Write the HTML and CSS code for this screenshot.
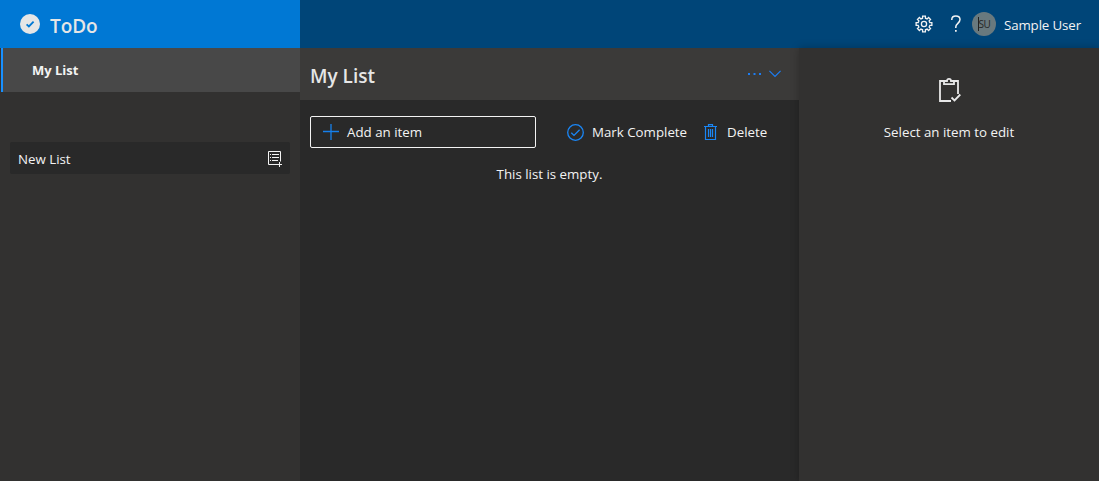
FILE: index.html
```html
<!DOCTYPE html>
<html lang="en">
<head>
    <meta charset="UTF-8">
    <meta name="viewport" content="width=device-width, initial-scale=1.0">
    <title>ToDo</title>
    <link rel="stylesheet" href="styles.css">
</head>
<body>
    <header class="header">
        <div class="brand">
            <svg class="brand-icon" width="20" height="20" viewBox="0 0 20 20">
                <circle cx="10" cy="10" r="10" fill="#e6e6e6"/>
                <path d="M6.6 10.3l2.3 2.2 4.7-4.8" fill="none" stroke="#0078d4" stroke-width="1.8"/>
            </svg>
            <span class="brand-name">ToDo</span>
        </div>
        <div class="account">
            <svg class="gear" width="18" height="18" viewBox="0 0 18 18" fill="none" stroke="#f3f3f3" stroke-width="1.3">
                <path d="M7.56 3.19L7.61 1.12L10.39 1.12L10.44 3.19L12.09 3.87L13.59 2.45L15.55 4.41L14.13 5.91L14.81 7.56L16.88 7.61L16.88 10.39L14.81 10.44L14.13 12.09L15.55 13.59L13.59 15.55L12.09 14.13L10.44 14.81L10.39 16.88L7.61 16.88L7.56 14.81L5.91 14.13L4.41 15.55L2.45 13.59L3.87 12.09L3.19 10.44L1.12 10.39L1.12 7.61L3.19 7.56L3.87 5.91L2.45 4.41L4.41 2.45L5.91 3.87Z"/>
                <circle cx="9" cy="9" r="2.6"/>
            </svg>
            <svg class="help" width="10" height="18" viewBox="0 0 10 18">
                <path d="M.8 5V4.4C.8 2.1 2.500.9 4.800.9s4.200 1.300 4.200 3.600c0 3.700-4.200 4-4.200 7.500v1" fill="none" stroke="#f3f3f3" stroke-width="1.500"/>
                <path d="M4 15h1.700v1.700H4z" fill="#f3f3f3"/>
            </svg>
            <div class="avatar"><span>SU</span></div>
            <span class="user-name">Sample User</span>
        </div>
    </header>

    <div class="layout">
        <nav class="sidebar">
            <a class="list-link">My List</a>
            <div class="new-list">
                <span>New List</span>
                <svg width="16" height="16" viewBox="0 0 16 16" fill="none" stroke="#f3f3f3">
                    <path d="M10 13.500H1.500V.5h12v10"/>
                    <path d="M3 3.500h1M5 3.500h7M3 6.500h1M5 6.500h7M3 9.500h1M5 9.500h6"/>
                    <path d="M10 13.500h5M12.500 11v5"/>
                </svg>
            </div>
        </nav>

        <main class="content">
            <div class="title-bar">
                <h1>My List</h1>
                <svg class="more" width="14" height="4" viewBox="0 0 14 4" fill="#1d7df2">
                    <path d="M0 1h2v2H0zM5.500 1h2v2h-2zM11 1h2v2h-2z"/>
                </svg>
                <svg class="chevron" width="12" height="8" viewBox="0 0 12 8">
                    <path d="M.4.9L6 6.500 11.600.9" fill="none" stroke="#1d7df2" stroke-width="1.200"/>
                </svg>
            </div>
            <div class="toolbar">
                <div class="add-item">
                    <svg width="16" height="16" viewBox="0 0 16 16">
                        <path d="M0 7.500h16M8 0v16" fill="none" stroke="#1680ec" stroke-width="1.300"/>
                    </svg>
                    <span>Add an item</span>
                </div>
                <button class="command complete">
                    <svg width="17" height="17" viewBox="0 0 17 17" fill="none" stroke="#1a86f5" stroke-width="1.300">
                        <circle cx="8.500" cy="8.500" r="7.800"/>
                        <path d="M4.300 8.700l2.700 2.700 5.600-5.700"/>
                    </svg>
                    <span>Mark Complete</span>
                </button>
                <button class="command delete">
                    <svg width="13" height="17" viewBox="0 0 13 17" fill="none" stroke="#1a86f5" stroke-width="1.200">
                        <path d="M0 2.500h13M4.500 2.500V.6h4v1.900M1.500 2.500v13h10v-13"/>
                        <path d="M4.500 5v8M6.500 5v8M8.500 5v8"/>
                    </svg>
                    <span>Delete</span>
                </button>
            </div>
            <p class="empty">This list is empty.</p>
        </main>

        <aside class="details">
            <svg class="clipboard" width="22" height="26" viewBox="0 0 22 26" fill="none" stroke="#e8e8e8" stroke-width="1.800">
                <path d="M12 23H1V3h4M15 3h4v13"/>
                <path d="M5 6.200V3h3C8 1.700 8.800.9 10 .9s2 .8 2 2.100h3v3.200z"/>
                <path d="M12.500 19.500l3 3 5.800-6"/>
            </svg>
            <p>Select an item to edit</p>
        </aside>
    </div>
</body>
</html>
```
FILE: styles.css
```css
* {
    margin: 0;
    padding: 0;
    box-sizing: border-box;
}

body {
    height: 100vh;
    display: flex;
    flex-direction: column;
    overflow: hidden;
    background-color: #292929;
    color: #f3f3f3;
    font-family: "Open Sans", "Noto Sans", sans-serif;
    font-size: 13.3px;
    line-height: 20px;
}

svg {
    display: block;
    flex-shrink: 0;
}

.header {
    display: flex;
    height: 48px;
    flex-shrink: 0;
    background-color: #004578;
}

.brand {
    display: flex;
    align-items: center;
    width: 300px;
    padding-left: 20px;
    background-color: #0078d4;
}

.brand-name {
    margin: 4px 0 0 10px;
    color: #e6e6e6;
    font-size: 19px;
    font-weight: 600;
    letter-spacing: -0.1px;
}

.account {
    display: flex;
    flex: 1;
    align-items: center;
    justify-content: flex-end;
    padding-right: 18px;
}

.help {
    margin: 0 11px 0 18px;
}

.avatar {
    display: flex;
    align-items: center;
    justify-content: center;
    width: 24px;
    height: 24px;
    margin-right: 8px;
    border-radius: 50%;
    background-color: #69797e;
    color: #262626;
    font-size: 10px;
}

.avatar span {
    height: 14px;
    border-left: 1px solid #222;
    line-height: 14px;
    letter-spacing: -0.5px;
}

.user-name {
    margin-top: 2px;
    letter-spacing: -0.12px;
}

.layout {
    display: flex;
    flex: 1;
}

.sidebar {
    width: 300px;
    background-color: #323130;
}

.list-link {
    display: block;
    height: 44px;
    padding-left: 29px;
    border-left: 2px solid #1890ff;
    margin-left: 1px;
    background-color: #484848;
    font-size: 13px;
    font-weight: 700;
    line-height: 45px;
}

.new-list {
    display: flex;
    align-items: center;
    justify-content: space-between;
    height: 32px;
    margin: 50px 10px 0;
    padding: 2px 7px 0 8px;
    border-radius: 2px;
    background-color: #292929;
}

.content {
    width: 499px;
}

.title-bar {
    display: flex;
    align-items: center;
    height: 52px;
    padding: 0 18px 0 10px;
    background-color: #3b3a39;
}

.title-bar h1 {
    flex: 1;
    margin-top: 3px;
    color: #e6e6e6;
    font-size: 19px;
    font-weight: 600;
}

.more {
    margin-right: 7px;
}

.toolbar {
    display: flex;
    align-items: center;
    padding: 16px 10px 0;
}

.add-item {
    display: flex;
    align-items: center;
    gap: 8px;
    width: 226px;
    height: 32px;
    padding-left: 12px;
    border: 1px solid #f3f3f3;
    border-radius: 2px;
}

.command {
    display: flex;
    align-items: center;
    gap: 8px;
    border: none;
    background: none;
    color: inherit;
    font: inherit;
}

.complete {
    margin-left: 31px;
}

.delete {
    gap: 10px;
    margin-left: 17px;
}

.empty {
    margin-top: 16px;
    text-align: center;
}

.details {
    display: flex;
    flex: 1;
    flex-direction: column;
    align-items: center;
    padding-top: 30px;
    background-color: #323130;
    box-shadow: 0 0 8px rgba(0, 0, 0, 0.25);
}

.clipboard {
    margin-left: 2px;
}

.details p {
    margin-top: 18px;
}
```
